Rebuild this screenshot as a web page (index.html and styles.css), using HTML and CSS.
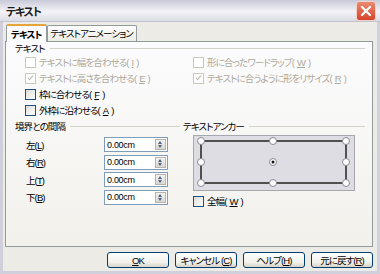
FILE: index.html
```html
<!DOCTYPE html>
<html>
  <head>
    <title>テキスト</title>
    <link rel="stylesheet" href="styles.css">
  </head>
  <body>
    <div class="window">
      <div class="titlebar">
        <span class="title">テキスト</span>
        <span class="close">
          <svg width="18" height="18" viewBox="0 0 18 18">
            <path d="M5 5 L13 13 M13 5 L5 13" stroke="#fff" stroke-width="2.2" stroke-linecap="round"/>
          </svg>
        </span>
      </div>

      <div class="dialog">
        <div class="tabs">
          <div class="tab active">テキスト</div>
          <div class="tab">テキストアニメーション</div>
        </div>

        <div class="panel">
          <div class="legend"><span>テキスト</span></div>
          <div class="checks">
            <label class="check disabled"><span class="box"></span>テキストに幅を合わせる(<u>I</u>)</label>
            <label class="check disabled"><span class="box"></span>形に合ったワードラップ(<u>W</u>)</label>
            <label class="check disabled"><span class="box checked"></span>テキストに高さを合わせる(<u>E</u>)</label>
            <label class="check disabled"><span class="box checked"></span>テキストに合うように形をリサイズ(<u>R</u>)</label>
            <label class="check"><span class="box"></span>枠に合わせる(<u>F</u>)</label>
            <span></span>
            <label class="check"><span class="box"></span>外枠に沿わせる(<u>A</u>)</label>
            <span></span>
          </div>

          <div class="lower">
            <div class="col">
              <div class="legend"><span>境界との間隔</span></div>
              <div class="spins">
                <div class="spin-row"><span class="spin-label">左(<u>L</u>)</span><span class="field">0.00cm<span class="spin"></span></span></div>
                <div class="spin-row"><span class="spin-label">右(<u>R</u>)</span><span class="field">0.00cm<span class="spin"></span></span></div>
                <div class="spin-row"><span class="spin-label">上(<u>T</u>)</span><span class="field">0.00cm<span class="spin"></span></span></div>
                <div class="spin-row"><span class="spin-label">下(<u>B</u>)</span><span class="field">0.00cm<span class="spin"></span></span></div>
              </div>
            </div>
            <div class="col">
              <div class="legend"><span>テキストアンカー</span></div>
              <div class="anchor">
                <svg width="162" height="56" viewBox="0 0 162 56">
                  <rect x="0.5" y="0.5" width="161" height="55" fill="#dddde3" stroke="#a7a7b0"/>
                  <rect x="8" y="6" width="145" height="42" fill="none" stroke="#222" stroke-width="1.5"/>
                  <g fill="#fff" stroke="#8a8a92">
                    <circle cx="8" cy="6" r="3.5"/>
                    <circle cx="80" cy="6" r="3.5"/>
                    <circle cx="153" cy="6" r="3.5"/>
                    <circle cx="8" cy="27" r="3.5"/>
                    <circle cx="80" cy="27" r="3.5"/>
                    <circle cx="153" cy="27" r="3.5"/>
                    <circle cx="8" cy="48" r="3.5"/>
                    <circle cx="80" cy="48" r="3.5"/>
                    <circle cx="153" cy="48" r="3.5"/>
                  </g>
                  <circle cx="80" cy="27" r="1.5" fill="#111"/>
                </svg>
              </div>
              <label class="check"><span class="box"></span>全幅(<u>W</u>)</label>
            </div>
          </div>
        </div>

        <div class="buttons">
          <button class="btn"><u>O</u>K</button>
          <button class="btn">キャンセル (<u>C</u>)</button>
          <button class="btn">ヘルプ(<u>H</u>)</button>
          <button class="btn">元に戻す(<u>R</u>)</button>
        </div>
      </div>
    </div>
  </body>
</html>
```

FILE: styles.css
```css
body {
  margin: 0;
  background-color: #ecebe5;
  font-family: "Liberation Sans", "Noto Sans CJK JP", sans-serif;
  font-size: 9.5px;
  font-feature-settings: "palt";
  letter-spacing: -0.9px;
  color: #000;
}
.window {
  width: 380px;
  height: 274px;
  box-sizing: border-box;
  border: 3px solid #cfd0dc;
  border-top: none;
  background-color: #ecebe5;
  display: flex;
  flex-direction: column;
}
.titlebar {
  height: 21px;
  margin: 0 -3px;
  padding: 0 4px 0 6px;
  display: flex;
  align-items: center;
  justify-content: space-between;
  background: linear-gradient(#c9cad9, #f3f3f7 55%, #dcdce6);
  border-bottom: 1px solid #c3c4d2;
}
.title {
  font-size: 11px;
  font-weight: bold;
  letter-spacing: -1.2px;
  color: #1a1a1a;
}
.close {
  width: 18px;
  height: 18px;
  border-radius: 3px;
  border: 1px solid #f4d0c8;
  background: linear-gradient(#e98a70, #d5462c);
  display: flex;
}
.dialog {
  flex: 1;
  padding: 1px 4px 0 2px;
  display: flex;
  flex-direction: column;
}
.tabs {
  display: flex;
  align-items: flex-end;
  height: 18px;
  padding-left: 1px;
}
.tab {
  height: 15px;
  line-height: 15px;
  padding: 0 3px;
  border: 1px solid #919b9c;
  border-bottom: none;
  border-radius: 2px 2px 0 0;
  background: linear-gradient(#fff, #ecebe5);
}
.tab.active {
  height: 18px;
  line-height: 17px;
  padding: 0 4px;
  font-weight: bold;
  background: #fcfcfe;
  border-top: 2px solid #e6a53a;
  box-sizing: border-box;
  position: relative;
  top: 1px;
  z-index: 1;
}
.panel {
  height: 206px;
  box-sizing: border-box;
  border: 1px solid #919b9c;
  background: linear-gradient(#fcfcfe, #f2f1eb);
  padding: 0 7px 0 9px;
}
.legend {
  height: 12px;
  display: flex;
  align-items: center;
  gap: 5px;
}
.legend::after {
  content: "";
  flex: 1;
  height: 1px;
  background-color: #d3d3cb;
}
.checks {
  display: grid;
  grid-template-columns: 168px 1fr;
  grid-auto-rows: 16px;
  padding-left: 10px;
}
.check {
  display: flex;
  align-items: center;
  gap: 3px;
  white-space: nowrap;
}
.check.disabled {
  color: #aca899;
}
.box {
  width: 9px;
  height: 9px;
  border: 1px solid #1c5180;
  background: linear-gradient(135deg, #dcdcd7, #fff);
  position: relative;
}
.disabled .box {
  border-color: #cac8bb;
  background: #fff;
}
.box.checked::after {
  content: "";
  position: absolute;
  left: 3px;
  top: 0px;
  width: 2px;
  height: 5px;
  border: solid #bdbab0;
  border-width: 0 1.5px 1.5px 0;
  transform: rotate(40deg);
}
.lower {
  display: grid;
  grid-template-columns: 165px 1fr;
  gap: 3px;
  margin-top: 2px;
}
.spins {
  display: flex;
  flex-direction: column;
  gap: 2.5px;
  margin-top: 5px;
}
.spin-row {
  display: flex;
  align-items: center;
  height: 15px;
}
.spin-label {
  width: 89px;
  padding-left: 11px;
  box-sizing: border-box;
}
.field {
  width: 64px;
  height: 15px;
  box-sizing: border-box;
  border: 1px solid #7f9db9;
  background: #fff;
  padding: 0 1px 0 2px;
  display: flex;
  align-items: center;
  justify-content: space-between;
  font-size: 9px;
  letter-spacing: -0.3px;
}
.spin {
  width: 11px;
  height: 11px;
  box-sizing: border-box;
  border: 1px solid #b7b5ad;
  background: linear-gradient(#f4f4f0, #d8d6cf);
  position: relative;
}
.spin::before,
.spin::after {
  content: "";
  position: absolute;
  left: 2px;
  border-left: 2.5px solid transparent;
  border-right: 2.5px solid transparent;
}
.spin::before {
  top: 1px;
  border-bottom: 3px solid #4d6185;
}
.spin::after {
  bottom: 1px;
  border-top: 3px solid #4d6185;
}
.anchor {
  margin: 3px 0 0 10px;
  height: 56px;
}
.anchor svg {
  display: block;
}
.col .check {
  height: 16px;
  margin: 2px 0 0 10px;
}
.buttons {
  display: flex;
  justify-content: flex-end;
  gap: 6px;
  margin-top: 5px;
}
.btn {
  width: 62px;
  height: 16px;
  padding: 0;
  border: 1px solid #003c74;
  border-radius: 3px;
  background: linear-gradient(#fff, #f0efe9 70%, #d6d3c6);
  font-family: inherit;
  font-size: 9.5px;
  font-feature-settings: "palt";
  letter-spacing: -0.9px;
  color: #000;
}
```
